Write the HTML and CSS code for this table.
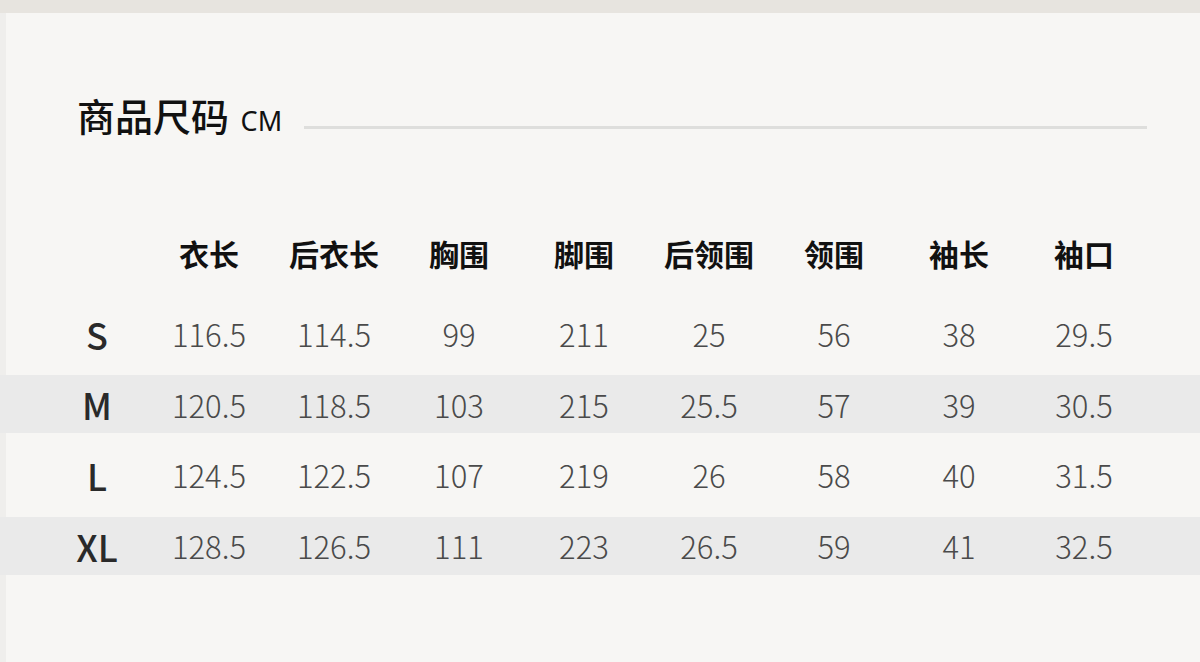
FILE: index.html
```html
<!DOCTYPE html>
<html lang="zh">
<head>
<meta charset="utf-8">
<link rel="stylesheet" href="styles.css">
</head>
<body>
<div class="topbar"></div>
<main class="main">
  <div class="title-row">
    <h1 class="title">商品尺码 <span class="unit">CM</span></h1>
    <div class="rule"></div>
  </div>
  <div class="table">
    <div class="row head">
      <div class="label"></div>
      <div class="cell">衣长</div><div class="cell">后衣长</div><div class="cell">胸围</div><div class="cell">脚围</div><div class="cell">后领围</div><div class="cell">领围</div><div class="cell">袖长</div><div class="cell">袖口</div>
    </div>
    <div class="row">
      <div class="label">S</div>
      <div class="cell">116.5</div><div class="cell">114.5</div><div class="cell">99</div><div class="cell">211</div><div class="cell">25</div><div class="cell">56</div><div class="cell">38</div><div class="cell">29.5</div>
    </div>
    <div class="row band">
      <div class="label">M</div>
      <div class="cell">120.5</div><div class="cell">118.5</div><div class="cell">103</div><div class="cell">215</div><div class="cell">25.5</div><div class="cell">57</div><div class="cell">39</div><div class="cell">30.5</div>
    </div>
    <div class="row">
      <div class="label">L</div>
      <div class="cell">124.5</div><div class="cell">122.5</div><div class="cell">107</div><div class="cell">219</div><div class="cell">26</div><div class="cell">58</div><div class="cell">40</div><div class="cell">31.5</div>
    </div>
    <div class="row band">
      <div class="label">XL</div>
      <div class="cell">128.5</div><div class="cell">126.5</div><div class="cell">111</div><div class="cell">223</div><div class="cell">26.5</div><div class="cell">59</div><div class="cell">41</div><div class="cell">32.5</div>
    </div>
  </div>
</main>
</body>
</html>
```
FILE: styles.css
```css
* { box-sizing: border-box; }
html, body { margin: 0; padding: 0; }
body {
  width: 1200px;
  height: 662px;
  overflow: hidden;
  background: #f7f6f4;
  font-family: "Noto Sans CJK SC", "Noto Sans", sans-serif;
}
.topbar {
  height: 13px;
  background: #e7e4df;
}
.main {
  height: 649px;
  background: linear-gradient(to right, #efeeec 0, #efeeec 6px, #f7f6f4 6px);
  padding-top: 80px;
}
.title-row {
  display: flex;
  align-items: center;
  padding: 0 53px 0 77px;
  height: 44px;
}
.title {
  margin: 0;
  font-size: 38px;
  font-weight: 500;
  line-height: 1;
  color: #111;
  white-space: nowrap;
}
.unit {
  font-size: 27px;
  font-weight: 400;
  font-family: "Noto Sans", sans-serif;
  margin-left: 3px;
}
.rule {
  flex: 1;
  height: 3px;
  margin-left: 22px;
  margin-top: 24px;
  background: #dededc;
}
.table {
  margin-top: 89px;
  display: flex;
  flex-direction: column;
  gap: 12.67px;
}
.row {
  display: grid;
  grid-template-columns: 146.5px repeat(8, 125px);
  align-items: center;
  height: 58px;
}
.row.head {
  margin-bottom: 8px;
  padding-bottom: 5px;
}
.row.band { background: #eaeaea; }
.cell {
  text-align: center;
  font-size: 31px;
  font-weight: 300;
  color: #4a4a4a;
  line-height: 1;
}
.head .cell {
  font-size: 30px;
  font-weight: 600;
  color: #111;
}
.label {
  padding-left: 47.5px;
  text-align: center;
  font-size: 36px;
  font-weight: 500;
  color: #2a2a2a;
  line-height: 1;
}
```
